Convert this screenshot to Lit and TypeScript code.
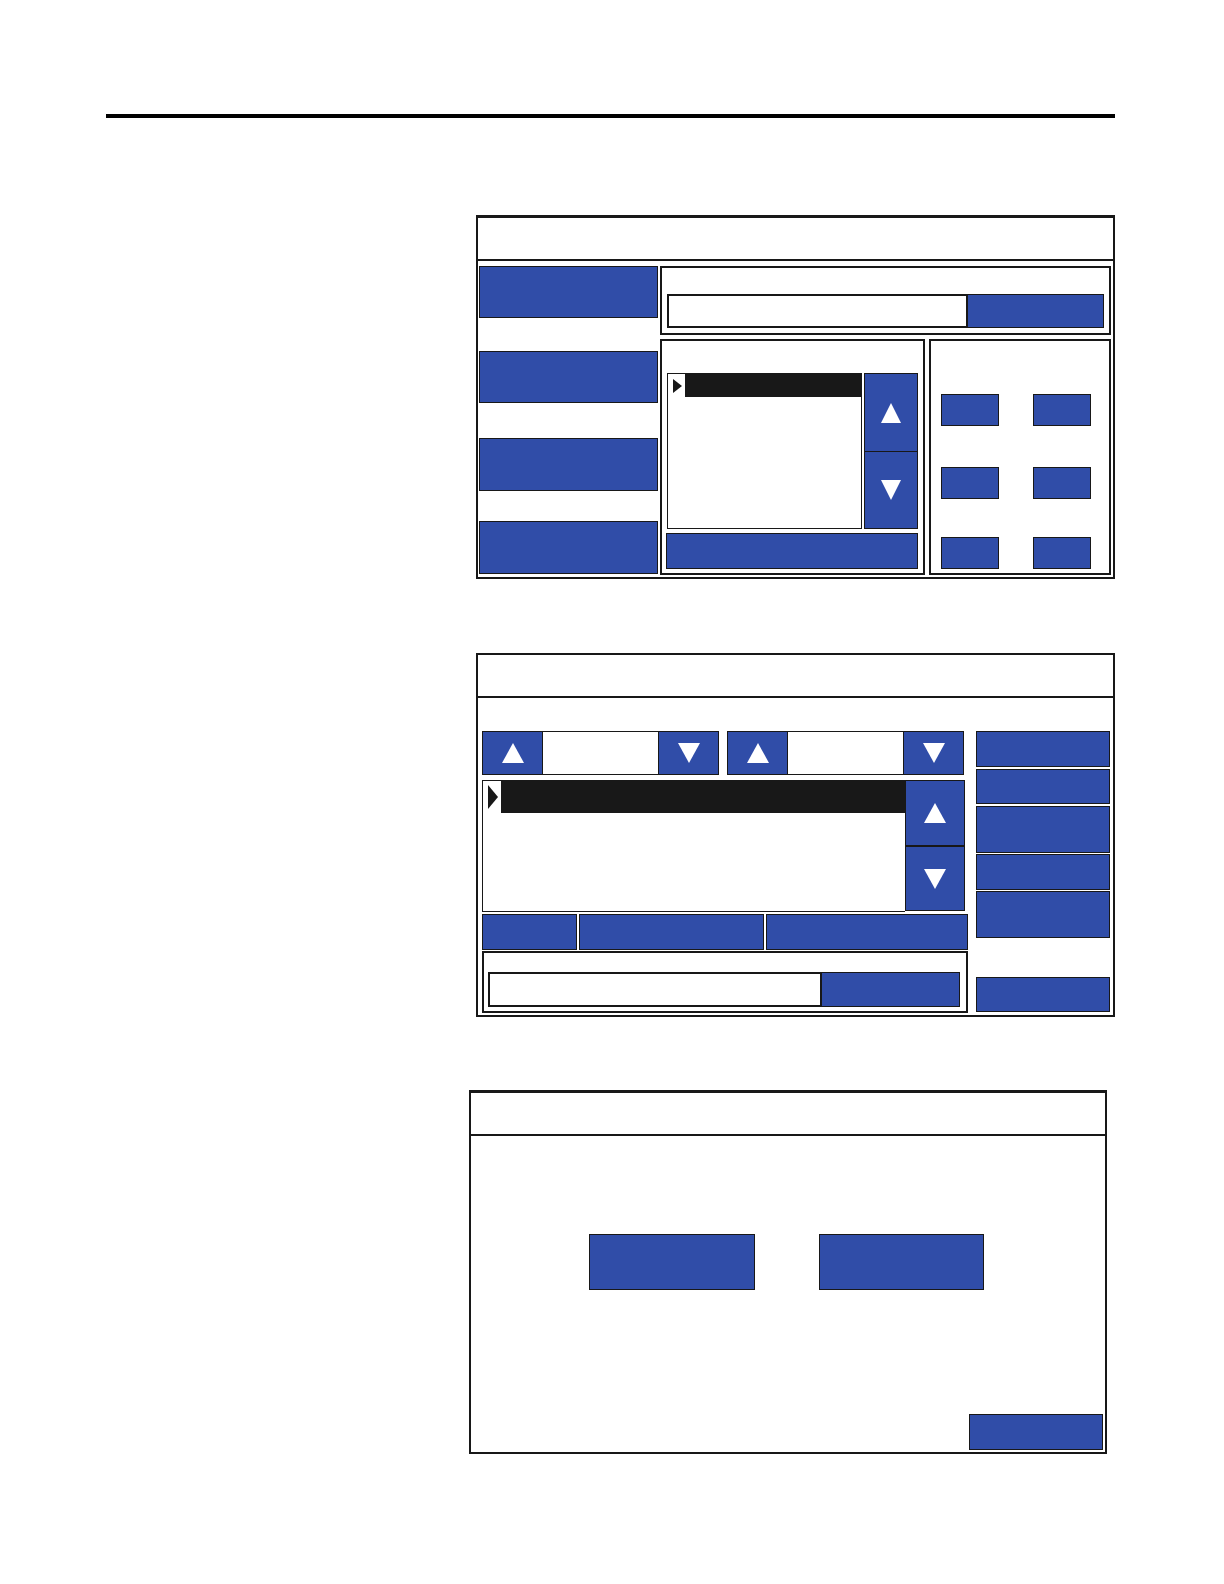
import { LitElement, html, css, svg } from "lit";
import { customElement, property } from "lit/decorators.js";

const base = css`
  *, *::before, *::after { box-sizing: border-box; }
  :host {
    --ink: #181818;
    --key: #304da8;
    font-family: "Liberation Sans", Arial, sans-serif;
    font-size: 14px;
  }
  .key {
    display: flex;
    align-items: center;
    justify-content: center;
    margin: 0;
    padding: 0;
    min-width: 0;
    border: 1px solid var(--ink);
    border-radius: 0;
    background: var(--key);
    color: #fff;
    font: inherit;
    cursor: pointer;
  }
  .key svg { display: block; fill: #fff; }
  .field {
    margin: 0;
    padding: 0 8px;
    min-width: 0;
    width: 100%;
    border: 2px solid var(--ink);
    border-radius: 0;
    background: #fff;
    color: var(--ink);
    font: inherit;
  }
  .group { border: 2px solid var(--ink); }
  .list { border: 1px solid var(--ink); }
  .row { display: flex; }
  .marker {
    display: flex;
    align-items: center;
    justify-content: center;
    flex: none;
  }
  .marker svg { display: block; fill: var(--ink); }
  .bar { flex: 1; background: var(--ink); }
`;

const up = (w: number) => html`<svg width=${w} height="20" viewBox="0 0 20 20" preserveAspectRatio="none" aria-hidden="true">${svg`<path d="M10 0L20 20H0Z"/>`}</svg>`;
const down = (w: number) => html`<svg width=${w} height="20" viewBox="0 0 20 20" preserveAspectRatio="none" aria-hidden="true">${svg`<path d="M0 0H20L10 20Z"/>`}</svg>`;
const pointer = (w: number, h: number) => html`<svg width=${w} height=${h} viewBox="0 0 10 20" preserveAspectRatio="none" aria-hidden="true">${svg`<path d="M0 0L10 10L0 20Z"/>`}</svg>`;

/* Frame shared by the three screens: title strip above a body slot. */
@customElement("screen-frame")
export class ScreenFrame extends LitElement {
  static styles = [base, css`
    :host { display: block; }
    .frame { border: 2px solid var(--ink); }
    .heavy { border-top-width: 3px; }
    .title { height: 41px; box-sizing: content-box; border-bottom: 2px solid var(--ink); }
  `];
  @property({ type: Boolean }) heavy = false;
  render() {
    return html`<section class="frame ${this.heavy ? "heavy" : ""}">
      <header class="title"></header>
      <slot></slot>
    </section>`;
  }
}

@customElement("keypad-screen")
export class KeypadScreen extends LitElement {
  static styles = [base, css`
    :host { display: block; }
    .body {
      display: grid;
      grid-template-columns: 179fr 451fr;
      gap: 2px;
      padding: 5px 2px 2px 1px;
    }
    .menu { display: grid; grid-template-rows: 85px 87px 83px 53px; align-items: start; }
    .menu .key { height: 52px; }
    .menu .key:nth-child(n + 3) { height: 53px; }
    .main { display: grid; grid-template-columns: 265fr 182fr; gap: 4px; }
    .entry {
      grid-column: 1 / -1;
      display: grid;
      grid-template-columns: 301fr 136fr;
      padding: 26px 5px 5px;
    }
    .entry .field { height: 34px; }
    .entry .key { border-left: 0; }
    .picker { padding: 32px 5px 4px 4px; display: grid; gap: 4px; }
    .browse { display: grid; grid-template-columns: 195fr 54fr; gap: 2px; padding-left: 1px; height: 156px; }
    .scroll { display: grid; grid-template-rows: 78px 78px; }
    .scroll .key:first-child { border-bottom: 0; }
    .list .row { height: 24px; margin: -1px -1px 0 0; }
    .marker { width: 17px; border-top: 1px solid var(--ink); padding-left: 2px; }
    .accept { height: 36px; }
    .pad {
      display: grid;
      grid-template-columns: 58fr 58fr;
      grid-template-rows: 73px 70px 32px;
      column-gap: 34px;
      align-items: start;
      padding: 53px 18px 4px 10px;
    }
    .pad .key { height: 32px; }
  `];
  render() {
    return html`<screen-frame heavy><div class="body">
      <nav class="menu">
        ${[1, 2, 3, 4].map((n) => html`<button class="key" aria-label="Menu ${n}"></button>`)}
      </nav>
      <div class="main">
        <div class="group entry">
          <input class="field" aria-label="Value" />
          <button class="key" aria-label="Enter value"></button>
        </div>
        <div class="group picker">
          <div class="browse">
            <div class="list"><div class="row">
              <span class="marker">${pointer(9, 14)}</span><span class="bar"></span>
            </div></div>
            <div class="scroll">
              <button class="key" aria-label="Scroll up">${up(20)}</button>
              <button class="key" aria-label="Scroll down">${down(20)}</button>
            </div>
          </div>
          <button class="key accept" aria-label="Select item"></button>
        </div>
        <div class="group pad">
          ${[1, 2, 3, 4, 5, 6].map((n) => html`<button class="key" aria-label="Key ${n}"></button>`)}
        </div>
      </div>
    </div></screen-frame>`;
  }
}

@customElement("browser-screen")
export class BrowserScreen extends LitElement {
  static styles = [base, css`
    :host { display: block; }
    .body {
      display: grid;
      grid-template-columns: 486fr 134fr;
      column-gap: 8px;
      padding: 33px 3px 2px 4px;
    }
    .left { display: flex; flex-direction: column; min-width: 0; }
    .spinners { display: grid; grid-template-columns: 1fr 1fr; gap: 8px; padding-right: 4px; margin-bottom: 5px; }
    .spinner { display: grid; grid-template-columns: 61fr 115fr 61fr; height: 44px; }
    .spinner .field { border-width: 1px 0; }
    .browse { display: grid; grid-template-columns: 423fr 60fr; height: 132px; padding-right: 3px; margin-bottom: 2px; }
    .browse .list { border-right: 0; }
    .list .row { height: 33px; margin-top: -1px; }
    .marker { width: 18px; border-top: 1px solid var(--ink); padding-left: 2px; }
    .scroll { display: grid; grid-template-rows: 66px 65px; }
    .actions { display: grid; grid-template-columns: 95fr 185fr 202fr; gap: 2px; height: 36px; margin-bottom: 1px; }
    .entry { display: grid; grid-template-columns: 334fr 138fr; padding: 19px 6px 4px 4px; }
    .entry .field { height: 35px; }
    .entry .key { border-left: 0; }
    .side {
      display: grid;
      grid-template-rows: 38px 37px 48px 37px 86px 35px;
      align-items: start;
    }
    .side .key { height: 36px; }
    .side .key:nth-child(2), .side .key:nth-child(6) { height: 35px; }
    .side .key.tall { height: 47px; }
  `];
  render() {
    const spinner = (name: string) => html`<div class="spinner">
      <button class="key" aria-label="${name} up">${up(22)}</button>
      <input class="field" aria-label=${name} />
      <button class="key" aria-label="${name} down">${down(22)}</button>
    </div>`;
    return html`<screen-frame><div class="body">
      <div class="left">
        <div class="spinners">${spinner("First value")}${spinner("Second value")}</div>
        <div class="browse">
          <div class="list"><div class="row">
            <span class="marker">${pointer(10, 24)}</span><span class="bar"></span>
          </div></div>
          <div class="scroll">
            <button class="key" aria-label="Scroll up">${up(22)}</button>
            <button class="key" aria-label="Scroll down">${down(22)}</button>
          </div>
        </div>
        <div class="actions">
          ${[1, 2, 3].map((n) => html`<button class="key" aria-label="Action ${n}"></button>`)}
        </div>
        <div class="group entry">
          <input class="field" aria-label="Value" />
          <button class="key" aria-label="Enter value"></button>
        </div>
      </div>
      <nav class="side">
        ${[false, false, true, false, true, false].map(
          (tall, i) => html`<button class="key ${tall ? "tall" : ""}" aria-label="Option ${i + 1}"></button>`
        )}
      </nav>
    </div></screen-frame>`;
  }
}

@customElement("choice-screen")
export class ChoiceScreen extends LitElement {
  static styles = [base, css`
    :host { display: block; }
    .body { padding: 98px 2px 2px; }
    .choices { display: grid; grid-template-columns: 116fr 166fr 64fr 165fr 119fr; margin-bottom: 124px; }
    .choices .key { height: 56px; }
    .choices .key:first-child { grid-column: 2; }
    .choices .key:last-child { grid-column: 4; }
    .foot { display: grid; grid-template-columns: 496fr 134fr; }
    .foot .key { grid-column: 2; height: 36px; }
  `];
  render() {
    return html`<screen-frame heavy><div class="body">
      <div class="choices">
        <button class="key" aria-label="First choice"></button>
        <button class="key" aria-label="Second choice"></button>
      </div>
      <div class="foot"><button class="key" aria-label="Return"></button></div>
    </div></screen-frame>`;
  }
}

@customElement("app-root")
export class AppRoot extends LitElement {
  static styles = [base, css`
    :host { display: block; background: #fff; }
    .page { padding: 114px 109px 130px 106px; }
    .rule { height: 4px; margin: 0 0 97px; border: 0; background: #000; }
    .screens { display: grid; gap: 74px; margin-left: 370px; }
    .screens choice-screen { margin: -1px 8px 0 -7px; }
  `];
  render() {
    return html`<main class="page">
      <hr class="rule" />
      <div class="screens">
        <keypad-screen></keypad-screen>
        <browser-screen></browser-screen>
        <choice-screen></choice-screen>
      </div>
    </main>`;
  }
}
